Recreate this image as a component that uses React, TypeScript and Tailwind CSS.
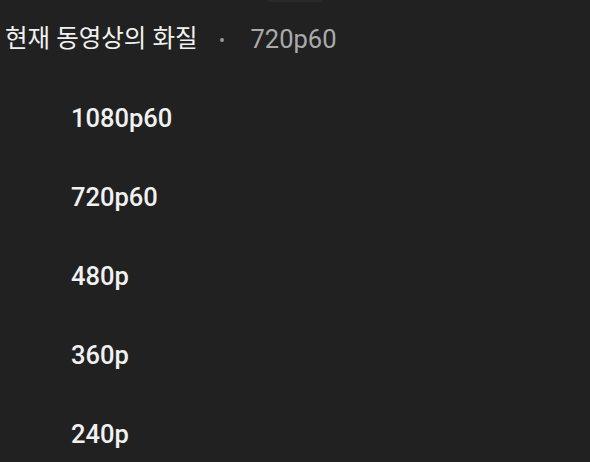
import React from 'react'

const qualities = ['1080p60', '720p60', '480p', '360p', '240p']

export default function App() {
    const current = '720p60'

    return (
        <div
            className="relative h-[462px] w-[590px] overflow-hidden bg-[#212121] text-white"
            style={{ fontFamily: 'Roboto, "Noto Sans CJK KR", sans-serif' }}
        >
            {/* drag handle */}
            <div className="absolute left-[268px] top-0 h-[2px] w-[54px] rounded-full bg-[#2a2a2a]" />

            {/* header */}
            <div className="flex h-[79px] items-center pl-[5px]">
                <span className="text-[24.5px] leading-none text-[#f1f1f1]">현재 동영상의 화질</span>
                <span className="ml-[23px] mr-[26px] mt-[1px] h-[4px] w-[4px] rounded-full bg-[#9a9a9a]" />
                <span className="text-[25.5px] leading-none text-[#aaaaaa]">{current}</span>
            </div>

            {/* quality options */}
            <ul>
                {qualities.map((q) => (
                    <li key={q} className="flex h-[79px] items-center pl-[71px]">
                        <span className="text-[25.5px] font-medium leading-none text-[#f1f1f1]">{q}</span>
                    </li>
                ))}
            </ul>
        </div>
    )
}
